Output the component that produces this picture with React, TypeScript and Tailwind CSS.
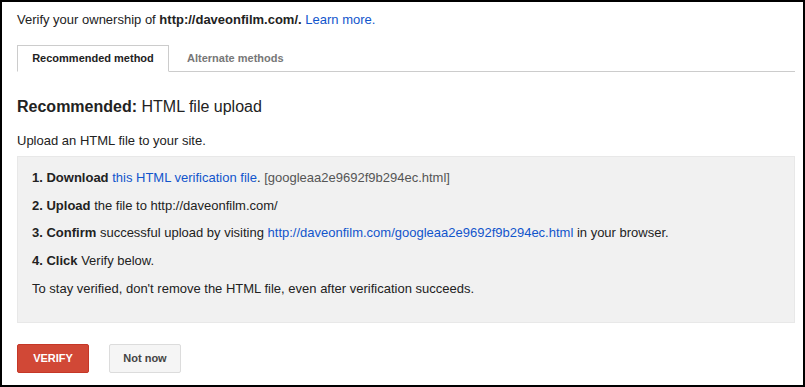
export default function App() {
  return (
    <div className="w-[805px] h-[387px] border-2 border-black bg-white text-[13px] text-[#222] font-['Liberation_Sans',Arial,sans-serif] overflow-hidden">
      <div className="pl-[15px] pr-[8px] pt-[10px]">
        <p className="leading-[16px]">
          Verify your ownership of <b>http://daveonfilm.com/.</b>{" "}
          <a className="text-[#1155cc]">Learn more.</a>
        </p>

        <div className="flex mt-[17px] border-b border-[#ccc] text-[11px] font-bold">
          <div className="w-[152px] h-[27px] -mb-px flex items-center justify-center border border-b-white border-[#ccc] bg-white text-[#222]">
            Recommended method
          </div>
          <div className="pl-[18px] h-[26px] flex items-center text-[#777]">
            Alternate methods
          </div>
        </div>

        <h2 className="mt-[25px] text-[16px] leading-[20px]">
          <b>Recommended:</b> HTML file upload
        </h2>
        <p className="mt-[16px] leading-[16px]">Upload an HTML file to your site.</p>

        <div className="mt-[7px] h-[167px] bg-[#f1f1f1] border border-[#e8e8e8] pl-[14px] pt-[13px] leading-[16px]">
          <p>
            <b>1. Download</b> <a className="text-[#1155cc]">this HTML verification file</a>.{" "}
            <span className="text-[#555]">[googleaa2e9692f9b294ec.html]</span>
          </p>
          <p className="mt-[12px]">
            <b>2. Upload</b> the file to http://daveonfilm.com/
          </p>
          <p className="mt-[11px]">
            <b>3. Confirm</b> successful upload by visiting{" "}
            <a className="text-[#1155cc]">http://daveonfilm.com/googleaa2e9692f9b294ec.html</a> in your browser.
          </p>
          <p className="mt-[12px]">
            <b>4. Click</b> Verify below.
          </p>
          <p className="mt-[12px]">To stay verified, don't remove the HTML file, even after verification succeeds.</p>
        </div>

        <div className="flex gap-[20px] mt-[21px] text-[11px] font-bold">
          <button className="w-[72px] h-[29px] rounded-[2px] bg-[#d14836] border border-[#c53727] text-white">
            VERIFY
          </button>
          <button className="w-[72px] h-[29px] rounded-[2px] bg-[#f5f5f5] border border-[#dcdcdc] text-[#444]">
            Not now
          </button>
        </div>
      </div>
    </div>
  );
}
